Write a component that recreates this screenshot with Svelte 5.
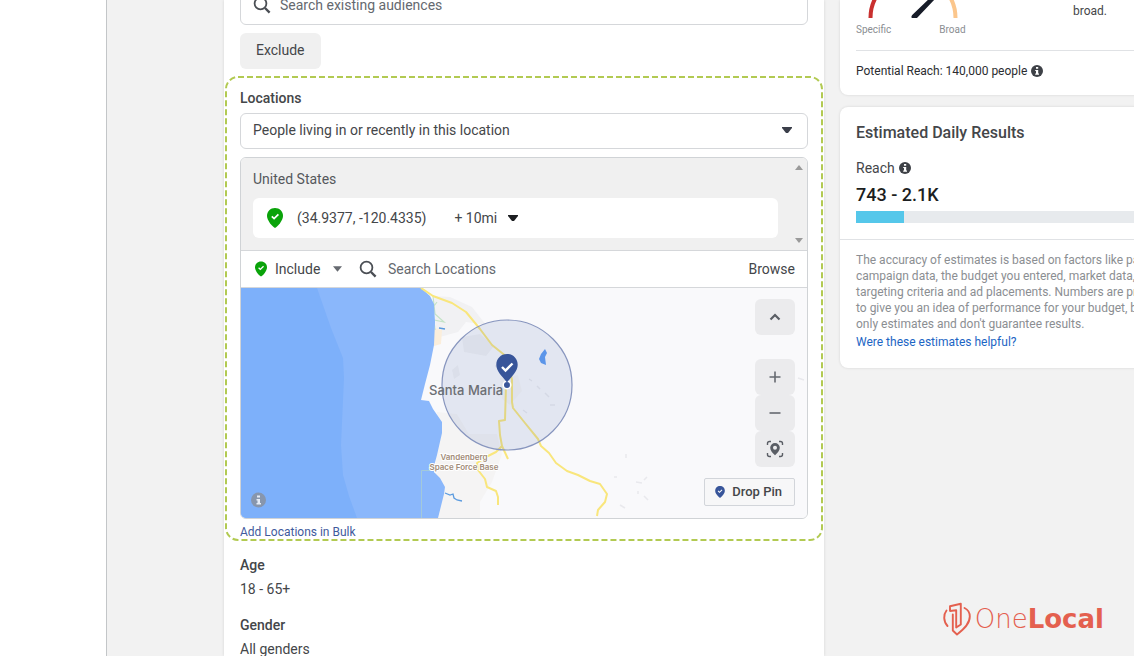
<script>
  let scope = $state('People living in or recently in this location');
  let radius = $state('+ 10mi');
  let mode = $state('Include');
  const reachShare = 15;
</script>

{#snippet magnifier()}
  <svg class="magnifier" viewBox="0 0 18 18" aria-hidden="true">
    <circle cx="7.5" cy="7.5" r="5.9" fill="none" stroke="#4a4e54" stroke-width="1.8" />
    <path d="M12 12l4.6 4.6" stroke="#4a4e54" stroke-width="2.4" />
  </svg>
{/snippet}

{#snippet pin(cls, color)}
  <svg class={cls} viewBox="0 0 16 20" aria-hidden="true">
    <path d="M8 0C3.4 0 0 3.4 0 7.8c0 2.7 1.3 5 3 7.4 1.300 1.800 3 3.600 5 4.800 2-1.200 3.700-3 5-4.800 1.700-2.400 3-4.700 3-7.400C16 3.400 12.600 0 8 0z" fill={color} />
    <path d="M4.800 8.300l2.300 2.300 4.300-4.300" fill="none" stroke="#fff" stroke-width="1.700" />
  </svg>
{/snippet}

{#snippet info()}
  <svg class="info" viewBox="0 0 12 12" aria-hidden="true">
    <circle cx="6" cy="6" r="6" fill="#3e4147" />
    <path d="M5 2h2.200v1.800H5zM4.200 4.900h3v3.700h.8v1.200H4.200V8.600H5V6h-.8z" fill="#fff" />
  </svg>
{/snippet}

<div class="page">
  <div class="rail"></div>
  <div class="canvas">
    <main>
      <label class="field search">
        {@render magnifier()}
        <input type="text" placeholder="Search existing audiences" aria-label="Search existing audiences" />
      </label>
      <button class="exclude">Exclude</button>

      <section class="locations">
        <svg class="outline" aria-hidden="true"><rect x="1" y="1" rx="12" /></svg>
        <label class="title" for="scope">Locations</label>
        <div class="field scope">
          <select id="scope" bind:value={scope}>
            <option>People living in or recently in this location</option>
          </select>
          <svg class="caret" viewBox="0 0 10 6" aria-hidden="true"><path d="M0 0h10v1L6 6H4L0 1z" fill="#3b3f4a" /></svg>
        </div>

        <div class="picker">
          <div class="chosen">
            <div class="country">
              <div class="country-name">United States</div>
              <div class="place">
                {@render pin('pin-large', '#0aa30a')}
                <span class="coords">(34.9377, -120.4335)</span>
                <select class="radius" aria-label="Radius" bind:value={radius}>
                  <option>+ 10mi</option>
                </select>
                <svg class="caret" viewBox="0 0 10 6" aria-hidden="true"><path d="M0 0h10v1L6 6H4L0 1z" fill="#1c1e21" /></svg>
              </div>
            </div>
            <div class="scroller" aria-hidden="true">
              <svg viewBox="0 0 8 5"><path d="M4 0l4 5H0z" fill="#9a9a9a" /></svg>
              <svg viewBox="0 0 8 5"><path d="M0 0h8L4 5z" fill="#9a9a9a" /></svg>
            </div>
          </div>

          <div class="toolbar">
            {@render pin('pin-small', '#0aa30a')}
            <select class="mode" aria-label="Include or exclude" bind:value={mode}>
              <option>Include</option>
            </select>
            <svg class="caret-small" viewBox="0 0 8 5" aria-hidden="true"><path d="M0 0h8L4 5z" fill="#666a70" /></svg>
            {@render magnifier()}
            <input type="text" placeholder="Search Locations" aria-label="Search Locations" />
            <button class="browse">Browse</button>
          </div>

          <div class="map">
            <svg class="terrain" viewBox="241 288 566 230" preserveAspectRatio="xMidYMid slice" role="img" aria-label="Map around Santa Maria">
              <rect x="0" y="288" width="1100" height="230" fill="#f9f9fb" />
              <path d="M434 296l16 1 22 10 14 18-20-3-8 10-22 6zM462 337l18-3 14 12-8 10-22-4zM452 370l6-5 2 10-6 4z" fill="#f1f1f3" />
              <path d="M437 412l20 2 12 20 28 0 5 20-10 28-12 20 0 16H434zM500 378l18-3 4 16-12 14-8-6z" fill="#f5f4f4" />
              <path d="M434 328l8 2-1 14-7 2z" fill="#fbeedb" />
              <path d="M433 296l2 18 9 8-10-2 1 10M434 306l3-4" fill="none" stroke="#c4e3c7" stroke-width="1.200" />
              <path d="M0 288H421L430 296 434 304 435 322 434 345 430 365 425 384 421 400 429 401 433 409 442 422 442 433 437 455 434 466 434 472 440 478 445 487 444 494 438 518H0z" fill="#8ab7fb" />
              <path d="M0 288H317L331 328 343 358 344 378 341 445 343 475 349 496 357 518H0z" fill="#7db0fa" />
              <path d="M421.500 518V470.500H436" fill="none" stroke="#a3c9da" />
              <path d="M445 493l5 2 3-1 1 4 3 2 5 1M439 328l6 1" fill="none" stroke="#5c9bdf" stroke-width="1.300" />
              <path d="M545 349l-4 5-2 5 2 4 5 2-1-8 2-4z" fill="#5e9cf2" />
              <g fill="none" stroke="#f9e67c" stroke-width="2" stroke-linejoin="round">
                <path d="M421 288l12 8 19 7 14 9 14 17 12 16 15 12 5 23v22l1 6 12 15 13 16 3 7 8 7 7 10 11 8 11 4 12 6 10 3 7 10-2 8-7 8-1 6" />
                <path d="M506 385l-1 35-6 1 1 14 2 11 6 13M502 446l-6 6-8 4-11 7 1 7 7 9 2 8 9 4 2 6v8" />
              </g>
              <path d="M626 454v4M614 477h3M636 482l6 1M644 480l3-3M638 491v3M644 496l4 4M620 505l5 3M798 378l6 2M495 366h8M529 379l3 2M537 386l3 3M545 393l4 4M550 405h5M523 410l4 3" stroke="#e9e9ed" stroke-width="1.500" />
              <circle cx="507" cy="385" r="65" fill="#4f6bb0" fill-opacity=".13" stroke="#8795be" stroke-width="1.200" />
              <text class="city" x="429" y="395">Santa Maria</text>
              <text class="base" x="464" y="460">Vandenberg</text>
              <text class="base" x="464" y="470">Space Force Base</text>
              <circle cx="507" cy="385" r="4.500" fill="#fff" />
              <path d="M507 354c-6.300 0-10.700 4.800-10.700 10.700 0 7 6.200 11.500 10.700 17.800 4.500-6.300 10.700-10.800 10.700-17.800 0-5.900-4.400-10.700-10.700-10.700z" fill="#38559a" />
              <path d="M502 367l3.500 3.500 7-7" fill="none" stroke="#fff" stroke-width="2.400" />
              <circle cx="507" cy="385" r="3" fill="#38559a" />
              <circle cx="258.500" cy="500" r="7.500" fill="#8796ad" />
              <path d="M257 495.500h3v2h-3zM256.500 499h3.500v4h1v1.500h-4.500V503h1v-2.500h-1z" fill="#e6edf7" />
            </svg>
            <div class="controls">
              <button aria-label="Collapse map"><svg viewBox="0 0 24 24"><path d="M7.500 14.500L12 10l4.500 4.500" fill="none" stroke="#5a5e65" stroke-width="2.200" /></svg></button>
              <div class="stack">
                <button aria-label="Zoom in"><svg viewBox="0 0 24 24"><path d="M6.500 12h11M12 6.500v11" stroke="#666a70" stroke-width="1.600" /></svg></button>
                <button aria-label="Zoom out"><svg viewBox="0 0 24 24"><path d="M6.500 12h11" stroke="#666a70" stroke-width="1.600" /></svg></button>
                <button aria-label="Center on pin"><svg viewBox="0 0 24 24">
                  <path d="M4.500 8V6.500a2 2 0 0 1 2-2H8M16 4.500h1.500a2 2 0 0 1 2 2V8M19.500 16v1.500a2 2 0 0 1-2 2H16M8 19.500H6.500a2 2 0 0 1-2-2V16" fill="none" stroke="#5a5e65" stroke-width="1.400" />
                  <path fill-rule="evenodd" d="M12 6a4.800 4.800 0 0 0-4.800 4.800c0 3 2.300 5.200 4.800 7.400 2.500-2.200 4.800-4.400 4.800-7.400A4.800 4.800 0 0 0 12 6zm0 2.800a2 2 0 1 1 0 4 2 2 0 0 1 0-4z" fill="#5a5e65" />
                </svg></button>
              </div>
              <button class="drop">{@render pin('pin-tiny', '#38559a')}Drop Pin</button>
            </div>
          </div>
        </div>
        <a class="bulk" href="#bulk">Add Locations in Bulk</a>
      </section>

      <section class="facts">
        <h3>Age</h3>
        <p>18 - 65+</p>
        <h3>Gender</h3>
        <p>All genders</p>
      </section>
    </main>

    <aside>
      <section class="card definition">
        <div class="meter">
          <div>
            <svg class="gauge" viewBox="0 0 90 18" aria-hidden="true">
              <path d="M2.500 18A42.500 42.500 0 0 1 13 -10" fill="none" stroke="#c9302f" stroke-width="4" />
              <path d="M87.500 18A42.500 42.500 0 0 0 77 -10" fill="none" stroke="#fbc68c" stroke-width="4" />
              <path d="M44.200 15L64-4l3 3L48.500 18.500a2.600 2.600 0 0 1-4.300-3.500z" fill="#171c28" />
            </svg>
            <div class="ends"><span>Specific</span><span>Broad</span></div>
          </div>
          <p>broad.</p>
        </div>
        <p class="potential">Potential Reach: 140,000 people {@render info()}</p>
      </section>

      <section class="card results">
        <div class="top">
          <h2>Estimated Daily Results</h2>
          <p class="metric">Reach {@render info()}</p>
          <p class="amount">743 - 2.1K</p>
          <div class="bar"><div style="width: {reachShare}%"></div></div>
        </div>
        <div class="note">
          <p>The accuracy of estimates is based on factors like past campaign data, the budget you entered, market data, targeting criteria and ad placements. Numbers are provided to give you an idea of performance for your budget, but are only estimates and don't guarantee results.</p>
          <a href="#feedback">Were these estimates helpful?</a>
        </div>
      </section>
    </aside>
  </div>

  <div class="brand">
    <svg viewBox="0 0 28 34" aria-hidden="true">
      <g fill="none" stroke="#e4604f" stroke-width="1.900" stroke-linejoin="round" stroke-linecap="round">
        <path d="M7 4.200L17.800 1.800V22.500l-4.600 3V8.200L7 9z" />
        <path d="M9.800 12.500V28.500l4.200 4C20.500 27.500 26.800 22 26.800 14.500 26.800 10.500 24.500 7.500 21.500 6" />
        <path d="M3.500 8.500C.300 12.500.300 19.500 4.500 24" />
      </g>
    </svg>
    <span>One<b>Local</b></span>
  </div>
</div>

<style>
  :global(body) { margin: 0; }
  .page {
    position: relative;
    display: flex;
    height: 100vh;
    overflow: hidden;
    font: 14px/20px Roboto, "Liberation Sans", sans-serif;
    color: #444649;
    background: #f2f2f2;
  }
  .page * { box-sizing: border-box; }
  p, h2, h3 { margin: 0; }
  button, input, select {
    font: inherit;
    color: inherit;
    border: 0;
    margin: 0;
    padding: 0;
    background: none;
    appearance: none;
  }
  input { flex: 1; min-width: 0; outline: 0; }
  input::placeholder { color: #65696f; opacity: 1; }
  svg { display: block; flex: none; }
  a { text-decoration: none; }

  .rail { flex: none; width: 107px; background: #fff; border-right: 1px solid #c3c6c8; }
  .canvas { flex: 1; min-width: 0; display: flex; gap: 16px; padding-left: 117px; }

  main {
    flex: 1 0 600px;
    max-width: 600px;
    padding: 0 16px;
    background: #fff;
    box-shadow: 0 0 3px rgba(0, 0, 0, .12);
  }
  .field {
    display: flex;
    align-items: center;
    height: 36px;
    padding: 0 12px;
    border: 1px solid #d5d7da;
    border-radius: 6px;
    background: #fff;
  }
  .magnifier { width: 18px; height: 18px; }
  .search { gap: 9px; margin-top: -11px; padding-bottom: 4px; }
  .exclude {
    height: 36px;
    margin-top: 8px;
    padding: 0 16px 2px;
    border-radius: 6px;
    background: #f0f0f0;
  }
  .locations {
    position: relative;
    margin: 7px -15px 0 -15px;
    padding: 12px 15px 0;
  }
  .outline { position: absolute; inset: 0; width: 100%; height: 100%; pointer-events: none; }
  .outline rect {
    width: calc(100% - 2px);
    height: calc(100% - 2px);
    fill: none;
    stroke: #b2ca52;
    stroke-width: 2px;
    stroke-dasharray: 6 3;
  }
  .title { display: block; margin-bottom: 5px; font-weight: 500; }
  .scope { padding-right: 15px; padding-bottom: 2px; }
  .scope select { flex: 1; }
  .caret { width: 10px; height: 6px; }
  .picker {
    margin-top: 8px;
    border: 1px solid #d0d3d6;
    border-radius: 6px;
    overflow: hidden;
  }
  .chosen { display: flex; background: #f0f0f0; border-bottom: 1px solid #d5d7da; }
  .country { flex: 1; padding: 11px 12px 12px; }
  .country-name { margin-bottom: 9px; color: #55585c; }
  .place {
    display: flex;
    align-items: center;
    height: 40px;
    padding: 0 14px 1px;
    border-radius: 6px;
    background: #fff;
  }
  .pin-large { width: 16px; height: 20px; }
  .coords { margin: 0 28px 0 14px; }
  .radius { margin-right: 11px; }
  .scroller {
    display: flex;
    flex-direction: column;
    justify-content: space-between;
    align-items: center;
    width: 17px;
    padding: 7px 0;
  }
  .scroller svg { width: 8px; height: 5px; }
  .toolbar {
    display: flex;
    align-items: center;
    height: 37px;
    padding: 0 12px 0 14px;
    border-bottom: 1px solid #d5d7da;
    background: #fff;
  }
  .pin-small { width: 12px; height: 16px; margin-right: 8px; }
  .mode { margin-right: 12px; }
  .caret-small { width: 9px; height: 6px; margin-right: 17px; }
  .toolbar .magnifier { margin-right: 11px; }
  .map { position: relative; height: 230px; }
  .terrain { width: 100%; height: 100%; }
  .city { font: 500 13px Inter, sans-serif; fill: #6b6e73; }
  .base { font: 600 8px Inter, sans-serif; fill: #a18b78; text-anchor: middle; stroke: #fff; stroke-width: 2px; paint-order: stroke; }
  .controls {
    position: absolute;
    inset: 11px 12px 12px auto;
    display: flex;
    flex-direction: column;
    align-items: flex-end;
    justify-content: space-between;
  }
  .controls button {
    display: flex;
    align-items: center;
    justify-content: center;
    width: 40px;
    height: 36px;
    border-radius: 6px;
    background: #ebebed;
  }
  .controls button svg { width: 24px; height: 24px; }
  .stack { margin-top: 12px; }
  .controls .drop {
    gap: 7px;
    width: auto;
    height: 28px;
    padding: 0 12px 0 10px;
    border: 1px solid #d2d5da;
    border-radius: 2px;
    background: #f7f7f8;
    font-size: 13px;
    font-weight: 500;
  }
  .controls .drop svg { width: 10px; height: 12px; }
  .bulk { display: block; padding: 5px 0 1px; font-size: 12px; line-height: 16px; color: #3f5a9d; }
  .facts { padding-top: 14px; }
  h3 { font-size: 14px; font-weight: 500; margin-bottom: 4px; }
  .facts p { margin-bottom: 16px; }

  aside { flex: none; width: 352px; }
  .card { background: #fff; border-radius: 8px; box-shadow: 0 0 3px rgba(0, 0, 0, .12); }
  .definition { padding: 0 16px; height: 95px; border-radius: 0 0 8px 8px; font-size: 12px; }
  .meter { display: flex; justify-content: space-between; height: 51px; border-bottom: 1px solid #e0e2e5; }
  .meter p { width: 103px; line-height: 22px; }
  .gauge { width: 90px; height: 18px; margin-left: 12px; }
  .ends { display: flex; justify-content: space-between; gap: 48px; margin-top: 4px; font-size: 10px; line-height: 16px; color: #8b8e92; }
  .potential { display: flex; align-items: center; gap: 4px; padding-top: 10px; color: #2b2d30; }
  .info { width: 12px; height: 12px; }
  .results { margin-top: 12px; }
  .top { padding: 16px 16px 16px; border-bottom: 1px solid #e0e2e5; }
  h2 { font-size: 16px; line-height: 20px; font-weight: 500; }
  .metric { display: flex; align-items: center; gap: 4px; margin-top: 15px; }
  .amount { margin: 5px 0 4px; font-size: 18px; line-height: 24px; font-weight: 500; color: #1c1e21; }
  .bar { height: 12px; background: #e7eaed; }
  .bar div { height: 100%; background: #55c7ea; }
  .note { padding: 12px 16px 18px; font-size: 12px; line-height: 16px; color: #8b8e92; }
  .note a { display: block; margin-top: 2px; color: #1c65c4; }

  .brand {
    position: absolute;
    right: 30px;
    bottom: 20px;
    display: flex;
    align-items: center;
    gap: 4px;
    font: 200 26px/34px "DejaVu Sans", sans-serif;
    color: #e4604f;
  }
  .brand svg { width: 28px; height: 34px; }
  .brand b { font-weight: 700; }
</style>
